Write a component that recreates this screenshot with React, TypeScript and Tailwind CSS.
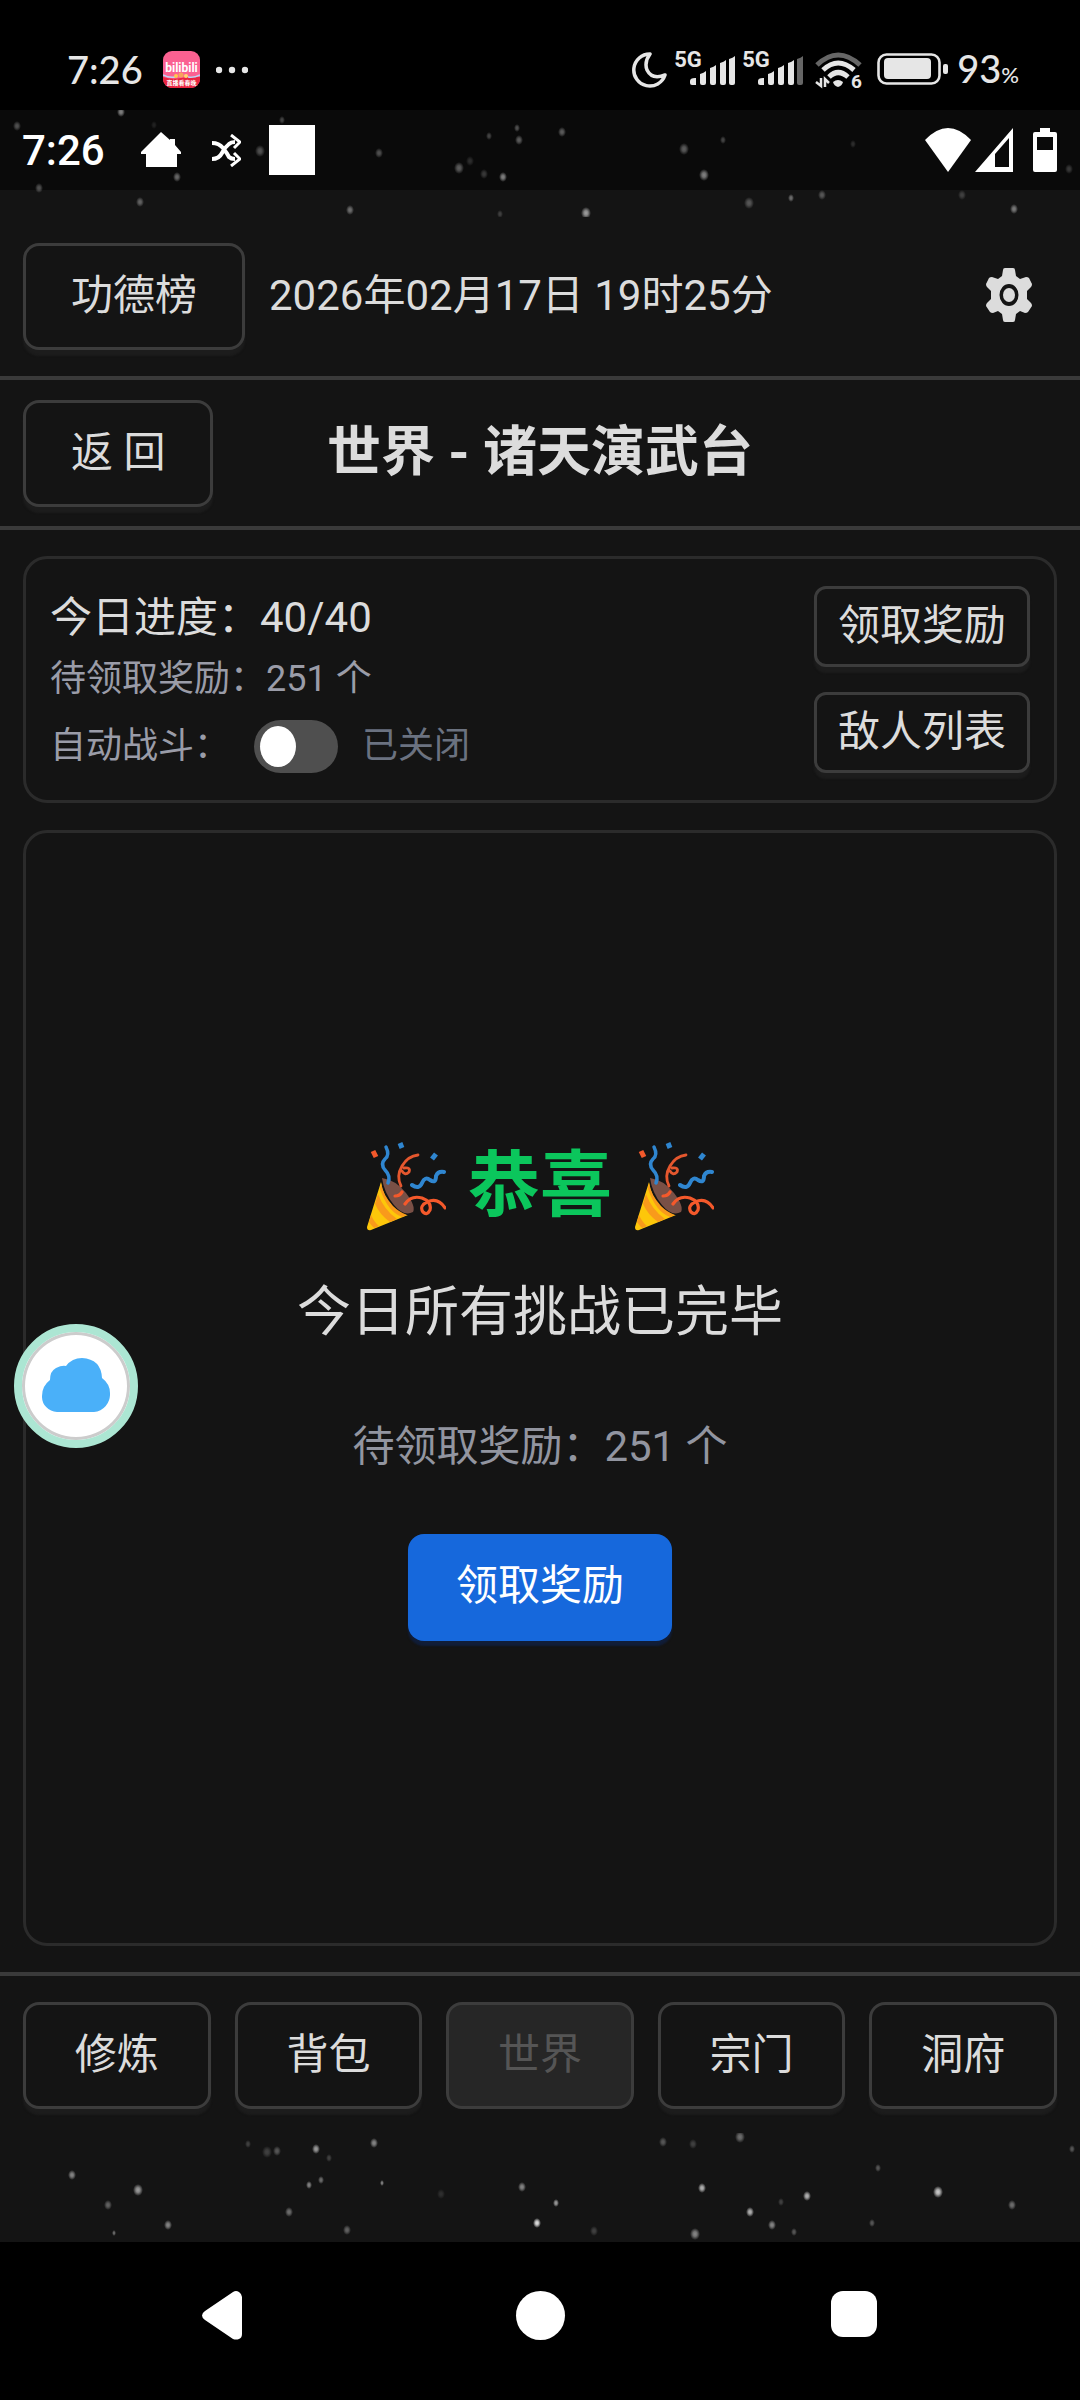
import React, { useState } from 'react';

type Star = [x: number, y: number, r: number, opacity: number];

const topStars: Star[] = [
  [17, 16, 4, 0.3], [121, 2, 4, 0.5], [154, 15, 3, 0.1], [282, 10, 3, 0.25], [260, 41, 5, 0.3],
  [177, 67, 4, 0.4], [39, 78, 4, 0.3], [140, 92, 4, 0.35], [350, 100, 4, 0.4], [379, 43, 4, 0.3],
  [459, 58, 5, 0.35], [470, 51, 4, 0.15], [484, 64, 4, 0.2], [503, 67, 4, 0.5], [489, 26, 3, 0.25],
  [517, 18, 3, 0.3], [519, 30, 4, 0.35], [500, 104, 3, 0.2], [562, 22, 4, 0.35], [684, 39, 5, 0.35],
  [704, 65, 5, 0.5], [723, 30, 3, 0.25], [853, 34, 3, 0.15], [586, 103, 5, 0.6], [749, 93, 5, 0.3],
  [791, 88, 3, 0.4], [822, 85, 4, 0.3], [962, 85, 4, 0.2], [1014, 99, 4, 0.45], [1069, 59, 4, 0.2],
];

const bottomStars: Star[] = [
  [248, 11, 3, 0.2], [267, 19, 5, 0.2], [277, 18, 4, 0.3], [316, 16, 4, 0.6], [329, 25, 3, 0.2],
  [374, 10, 4, 0.5], [72, 42, 4, 0.5], [138, 57, 5, 0.6], [108, 72, 4, 0.35], [168, 92, 4, 0.5],
  [309, 52, 3, 0.5], [321, 47, 3, 0.4], [382, 50, 2, 0.5], [289, 79, 4, 0.4], [347, 97, 4, 0.35],
  [114, 100, 2, 0.4], [441, 61, 4, 0.12], [522, 54, 4, 0.5], [537, 90, 4, 0.9], [556, 70, 3, 0.6],
  [594, 98, 4, 0.2], [663, 9, 4, 0.3], [693, 11, 4, 0.2], [740, 4, 5, 0.4], [878, 35, 3, 0.3],
  [702, 55, 4, 0.7], [695, 101, 5, 0.5], [750, 79, 4, 0.7], [772, 92, 4, 0.5], [781, 69, 3, 0.2],
  [794, 99, 3, 0.3], [807, 63, 4, 0.7], [872, 90, 3, 0.3], [938, 59, 5, 0.8], [1012, 72, 4, 0.4],
  [1072, 16, 3, 0.3],
];

function Stars({ stars, height }: { stars: Star[]; height: number }) {
  return (
    <svg
      className="pointer-events-none absolute left-0 top-0 w-full"
      viewBox={`0 0 1080 ${height}`}
      height={height}
      preserveAspectRatio="xMidYMin slice"
      aria-hidden="true"
    >
      <defs>
        <radialGradient id="star">
          <stop offset="0" stopColor="#fff" />
          <stop offset="0.4" stopColor="#fff" stopOpacity="0.8" />
          <stop offset="1" stopColor="#fff" stopOpacity="0" />
        </radialGradient>
      </defs>
      {stars.map(([x, y, r, opacity]) => (
        <ellipse key={`${x}-${y}`} cx={x} cy={y} rx={r} ry={r + 1} fill="url(#star)" opacity={opacity} />
      ))}
    </svg>
  );
}

function BiliIcon() {
  return (
    <svg width="37" height="37" viewBox="0 0 37 37" aria-hidden="true">
      <defs>
        <clipPath id="bili">
          <rect width="37" height="37" rx="9" />
        </clipPath>
      </defs>
      <g clipPath="url(#bili)">
        <rect width="37" height="37" fill="#fb6191" />
        <path d="M0 26q9 3 18 1T37 26v11H0z" fill="#e9243f" />
        <path d="M0 24q6 3 12 2M37 24q-6 3-12 2" stroke="#bcd3f5" strokeWidth="1.5" fill="none" />
        <circle cx="13" cy="25" r="2" fill="#ffc84a" />
        <circle cx="18" cy="24" r="2.5" fill="#f7a35c" />
        <circle cx="23" cy="25" r="2" fill="#ffd76a" />
        <text x="18.5" y="21" textAnchor="middle" fontSize="12" fontWeight="700" fill="#fff">
          bilibili
        </text>
        <text x="18.5" y="34" textAnchor="middle" fontSize="6" fontWeight="700" fill="#fff">
          直播看春晚
        </text>
      </g>
    </svg>
  );
}

function CellBars({ weak }: { weak?: boolean }) {
  return (
    <div className="relative h-9 w-[61px]">
      <span className="absolute left-0 top-0 text-[22px] leading-[17px] font-bold">5G</span>
      <svg className="absolute left-4 top-1" width="45" height="30" viewBox="0 0 45 30" aria-hidden="true">
        <path d="M0 26q0-3 5-3h1v7H2q-2 0-2-2z" />
        <path d="M10 19q4-1 6-3v12q0 2-2 2h-2q-2 0-2-2z" />
        <path d="M20 13q4-1 6-3v18q0 2-2 2h-2q-2 0-2-2z" />
        <path d="M30 8q4-1 6-3v23q0 2-2 2h-2q-2 0-2-2z" />
        <path d="M39 4q4-1 6-3v27q0 2-2 2h-2q-2 0-2-2z" fill={weak ? '#666' : undefined} />
      </svg>
    </div>
  );
}

function PhoneStatusBar() {
  return (
    <div className="flex h-[110px] items-start bg-black pl-[67px] pr-[61px] pt-[51px] text-[#e6e6e6] fill-[#e6e6e6]">
      <span className="font-[Lato] text-[38px] leading-[36px] font-medium">7:26</span>
      <div className="ml-5 flex items-center gap-4">
        <BiliIcon />
        <svg width="32" height="8" viewBox="0 0 32 8" aria-hidden="true">
          <circle cx="3" cy="4" r="3.2" />
          <circle cx="16" cy="4" r="3.2" />
          <circle cx="29" cy="4" r="3.2" />
        </svg>
      </div>
      <div className="ml-auto flex items-start">
        <svg width="36" height="38" viewBox="0 0 36 38" aria-hidden="true">
          <path
            d="M18 3A16 16 0 1 0 33 24Q20 29 15 19Q12 11 18 3z"
            fill="none"
            stroke="#e6e6e6"
            strokeWidth="3.5"
            strokeLinejoin="round"
          />
        </svg>
        <div className="ml-1.5 flex gap-[7px]">
          <CellBars />
          <CellBars weak />
        </div>
        <svg className="ml-3" width="52" height="44" viewBox="0 0 52 44" fill="none" aria-hidden="true">
          <path d="M2 14Q23-6 45 14" stroke="#666" strokeWidth="5" />
          <path d="M8 19Q23 5 39 19" stroke="#e6e6e6" strokeWidth="5" />
          <path d="M14 26Q23 17 33 26" stroke="#e6e6e6" strokeWidth="5" />
          <path d="M18 31q5-4 10 0-1 4-5 5-4-1-5-5z" fill="#e6e6e6" />
          <path d="M6 27v8l-5-4M10 36v-8l4 4" stroke="#e6e6e6" strokeWidth="2.5" />
          <text x="36" y="37" fontSize="19" fontWeight="700" fill="#e6e6e6">
            6
          </text>
        </svg>
        <svg className="ml-2.5" width="72" height="36" viewBox="0 0 72 36" aria-hidden="true">
          <rect x="1.5" y="3.5" width="61" height="29" rx="8" fill="none" stroke="#e6e6e6" strokeWidth="2.6" />
          <rect x="7" y="7" width="47" height="21" rx="4" />
          <rect x="66" y="13" width="5" height="10" rx="2" />
        </svg>
        <span className="ml-2 font-[Lato] text-[38px] leading-[34px] font-medium">
          93<span className="text-[22px]">%</span>
        </span>
      </div>
    </div>
  );
}

function AppStatusBar() {
  return (
    <div className="flex h-20 items-center bg-[#0a0a0a] pl-[22px] pr-[23px] text-white fill-white">
      <span className="pt-0.5 text-[42px] leading-[50px] font-medium">7:26</span>
      <svg className="ml-9" width="40" height="36" viewBox="0 0 40 36" aria-hidden="true">
        <path d="M20 0l9 8V7h5v6l6 7v2h-4v13H5V22H0v-2z" />
      </svg>
      <svg className="ml-7.5" width="30" height="33" viewBox="0 0 30 33" fill="none" stroke="#fff" strokeWidth="4" aria-hidden="true">
        <path d="M1 9Q8 9 12 14T18 23q2 2 6 2M1 25q7 0 10-6t7-9q2-2 6-2" />
        <path d="M20 1l9 7-6 6M20 32l9-7-6-6" strokeWidth="3" />
      </svg>
      <span className="ml-7 h-[50px] w-[46px] bg-white" />
      <div className="ml-auto flex items-center">
        <svg width="46" height="44" viewBox="0 0 46 44" aria-hidden="true">
          <path d="M0 12Q23-12 46 12L23 44z" />
        </svg>
        <svg className="ml-1" width="38" height="44" viewBox="0 0 38 44" aria-hidden="true">
          <path fillRule="evenodd" d="M38 0v44H0zM34 10L20 26v13h14z" />
        </svg>
        <svg className="ml-5" width="24" height="44" viewBox="0 0 24 44" aria-hidden="true">
          <path fillRule="evenodd" d="M7 0h10v4h5q2 0 2 2v36q0 2-2 2H2q-2 0-2-2V6q0-2 2-2h5zM4 9v13h16V9z" />
        </svg>
      </div>
    </div>
  );
}

function GearIcon() {
  return (
    <svg width="46" height="54" viewBox="0 0 46 54" aria-hidden="true">
      <path
        fillRule="evenodd"
        fill="#dcdcdc"
        d="M19 0h8q2 0 2 2l1 6 4 3 6-2q2 0 3 1l3 6q0 2-1 3l-4 4v8l4 4q1 1 1 3l-4 6q-1 1-3 1l-5-2-4 3-1 6q0 2-2 2h-8q-2 0-2-2l-1-6-4-3-5 2q-2 0-3-1l-4-6q0-2 1-3l4-4v-8l-4-4q-1-1-1-3l3-6q1-1 3-1l6 2 4-3 1-6q0-2 2-2zM23 16a9.5 11 0 1 0 0 22 9.5 11 0 1 0 0-22z"
      />
      <ellipse cx="23" cy="27" rx="6" ry="7" fill="#dcdcdc" />
    </svg>
  );
}

function PartyPopper() {
  return (
    <svg width="80" height="90" viewBox="0 0 80 90" fill="none" strokeLinecap="round" aria-hidden="true">
      <path d="M16 37Q30 39 40 52T47 71Q38 76 28 64T16 37z" fill="#795046" />
      <path d="M15 41Q17 55 26 65T42 74L5 89Q1 90 1 86z" fill="#fdc70a" />
      <path d="M12 53Q18 69 31 78l-7 3Q14 74 9 63zM5 74q3 7 8 11l-5 2q-3-3-5-6zM15 42q2 12 12 23 6 6 14 9l-5 2Q22 71 14 48z" fill="#f99a1b" />
      <path d="M22 42q3-7-3-13-5-6 0-11 5-4 1-12" stroke="#2f86d0" strokeWidth="3.5" />
      <path d="M46 44q7 5 10-2 3-7 8-3 6 4 6-4 2-5 8-4" stroke="#2f86d0" strokeWidth="4" />
      <path d="M34 2l2 5M70 13l-4 5" stroke="#2f86d0" strokeWidth="5" strokeLinecap="butt" />
      <path d="M7 10l3 6" stroke="#f4592b" strokeWidth="5" strokeLinecap="butt" />
      <path d="M35 45q-5-10 1-20 6-10 16-11M38 27q7-1 5 4-4 4-7-1" stroke="#e4572e" strokeWidth="2.8" />
      <path d="M29 55q5 0 7-4M39 63q6-9 17-6 10 4 8 12-3 6-7 2-4-6 4-10 11-5 18 6" stroke="#f4592b" strokeWidth="3.2" />
    </svg>
  );
}

const outline = 'border-[3px] border-[#3c3c3c] bg-[#141414] shadow-[0_6px_2px_#1c1c1c]';

function Header() {
  return (
    <header className="flex items-center border-b-4 border-[#3a3a3a] px-[23px] pb-[26px] pt-[53px]">
      <button className={`h-[107px] rounded-2xl px-[45px] pb-0.5 ${outline}`}>功德榜</button>
      <time className="ml-6 pb-0.5" dateTime="2026-02-17T19:25">2026年02月17日 19时25分</time>
      <button className="ml-auto mr-[25px] pb-1" aria-label="设置">
        <GearIcon />
      </button>
    </header>
  );
}

function TitleBar() {
  return (
    <div className="grid grid-cols-[1fr_auto_1fr] items-center border-b-4 border-[#3a3a3a] px-[23px] pb-[19px] pt-5">
      <button className={`h-[107px] justify-self-start rounded-2xl px-[45px] pb-0.5 ${outline}`}>返 回</button>
      <h1 className="pb-0.5 text-[54px] leading-[64px] font-bold">世界 - 诸天演武台</h1>
    </div>
  );
}

function ProgressCard() {
  const [auto, setAuto] = useState(false);

  return (
    <section className="flex justify-between rounded-3xl border-[3px] border-[#2b2b2b] px-6 py-[27px]">
      <div className="flex flex-col">
        <p className="leading-[64px]">今日进度：40/40</p>
        <p className="text-[36px] leading-[58px] text-[#9a9ca8]">待领取奖励：251 个</p>
        <div className="mt-[11px] flex items-center text-[36px] leading-[54px] text-[#9a9ca8]">
          <label htmlFor="auto-battle">自动战斗：</label>
          <span className="relative ml-6 flex h-[53px] w-[84px] items-center">
            <input
              id="auto-battle"
              type="checkbox"
              role="switch"
              checked={auto}
              onChange={(e) => setAuto(e.target.checked)}
              className="peer h-full w-full appearance-none rounded-full bg-[#4f4f4f] checked:bg-[#1668dc]"
            />
            <span className="pointer-events-none absolute left-1.5 h-[41px] w-9 rounded-[50%] bg-white peer-checked:left-[42px]" />
          </span>
          <span className="ml-6 text-[#6b7280]">{auto ? '已开启' : '已关闭'}</span>
        </div>
      </div>
      <div className="flex flex-col gap-[25px]">
        <button className={`h-[81px] rounded-xl px-[21px] pb-0.5 ${outline}`}>领取奖励</button>
        <button className={`h-[81px] rounded-xl px-[21px] pb-0.5 ${outline}`}>敌人列表</button>
      </div>
    </section>
  );
}

function ResultCard() {
  return (
    <section className="flex flex-1 flex-col items-center justify-center rounded-3xl border-[3px] border-[#2b2b2b]">
      <h2 className="flex items-center gap-[22px] text-[72px] leading-[100px] font-bold text-[#0bc65c]">
        <PartyPopper />
        恭喜
        <PartyPopper />
      </h2>
      <p className="mt-9 text-[54px] leading-[82px]">今日所有挑战已完毕</p>
      <p className="mt-15 leading-[66px] text-[#9295a0]">待领取奖励：251 个</p>
      <button className="mt-[54px] h-[107px] rounded-2xl bg-[#1668dc] px-12 pb-0.5 text-white shadow-[0_5px_2px_#101d38]">
        领取奖励
      </button>
    </section>
  );
}

const tabs = ['修炼', '背包', '世界', '宗门', '洞府'];

function TabBar() {
  return (
    <nav className="flex gap-6 border-t-4 border-[#3a3a3a] px-[23px] pt-[26px]">
      {tabs.map((tab) =>
        tab === '世界' ? (
          <button
            key={tab}
            disabled
            className="h-[107px] flex-1 rounded-2xl border-[3px] border-[#3c3c3c] bg-[#262626] pb-0.5 text-[#555]"
          >
            {tab}
          </button>
        ) : (
          <button key={tab} className={`h-[107px] flex-1 rounded-2xl pb-0.5 ${outline}`}>
            {tab}
          </button>
        )
      )}
    </nav>
  );
}

function SystemNav() {
  return (
    <nav className="grid h-[158px] grid-cols-[1fr_auto_1fr] bg-black pt-[49px]">
      <button className="mr-[274px] h-12 justify-self-end" aria-label="返回">
        <svg width="40" height="49" viewBox="0 0 40 49" fill="#fff" aria-hidden="true">
          <path d="M31 1Q34-1 37 1t3 5v37q0 4-3 5t-6 0L3 29Q0 27 0 24.5T3 20z" />
        </svg>
      </button>
      <button className="h-[49px] w-[49px] rounded-full bg-white" aria-label="主页" />
      <button className="ml-[266px] h-[46px] w-[46px] rounded-xl bg-white" aria-label="最近任务" />
    </nav>
  );
}

// Floating cloud shortcut that hovers over the page
function CloudBubble() {
  return (
    <button
      className="absolute left-3.5 top-[1324px] flex h-[124px] w-[124px] items-center justify-center rounded-full border-8 border-[#ace6d3] bg-white pb-0.5 shadow-[inset_0_0_0_3px_#cccccc]"
      aria-label="云"
    >
      <svg width="68" height="54" viewBox="0 0 68 54" fill="#4ab0f9" aria-hidden="true">
        <path d="M15 54A15.5 15.5 0 0 1 0 38Q0 28 8 22Q8 13 14 10T24 8Q30 0 40 0Q59 1 60 20Q68 26 68 35A17 18 0 0 1 52 54z" />
      </svg>
    </button>
  );
}

export default function App() {
  return (
    <div className="relative flex min-h-screen flex-col bg-[#141414] font-['Roboto','Noto_Sans_CJK_SC',sans-serif] text-[42px] leading-[56px] text-[#dcdcdc]">
      <PhoneStatusBar />
      <div className="relative flex flex-1 flex-col">
        <AppStatusBar />
        <Stars stars={topStars} height={107} />
        <Header />
        <TitleBar />
        <main className="flex flex-1 flex-col gap-[27px] px-[23px] py-[26px]">
          <ProgressCard />
          <ResultCard />
        </main>
        <TabBar />
        <div className="relative mt-6 h-[109px] overflow-hidden">
          <Stars stars={bottomStars} height={109} />
        </div>
      </div>
      <SystemNav />
      <CloudBubble />
    </div>
  );
}
